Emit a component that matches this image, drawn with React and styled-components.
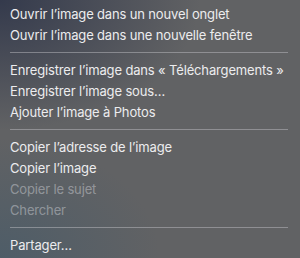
import styled, { createGlobalStyle } from 'styled-components';

const GlobalStyle = createGlobalStyle`
  html, body {
    margin: 0;
    padding: 0;
    width: 300px;
    height: 258px;
    overflow: hidden;
  }
`;

const Menu = styled.div`
  width: 300px;
  height: 258px;
  box-sizing: border-box;
  padding: 3.5px 12px 0 10px;
  background:
    radial-gradient(ellipse 160px 120px at 0% 100%, rgba(76, 92, 104, 0.9), rgba(76, 92, 104, 0) 100%),
    radial-gradient(ellipse 200px 130px at 0% 0%, rgba(52, 58, 76, 1), rgba(52, 58, 76, 0) 100%),
    #616264;
  font-family: Inter, "Noto Sans", sans-serif;
  font-size: 13px;
  letter-spacing: -0.15px;
  display: flex;
  flex-direction: column;
`;

const Item = styled.div`
  height: 21px;
  line-height: 21px;
  color: ${(p) => (p.disabled ? 'rgba(235, 235, 240, 0.4)' : '#ececee')};
  white-space: nowrap;
`;

const Separator = styled.div`
  height: 1px;
  margin: 6.5px 0 6.5px;
  background: rgba(200, 200, 205, 0.45);
`;

const groups = [
  [
    { label: 'Ouvrir l’image dans un nouvel onglet' },
    { label: 'Ouvrir l’image dans une nouvelle fenêtre' },
  ],
  [
    { label: 'Enregistrer l’image dans « Téléchargements »' },
    { label: 'Enregistrer l’image sous…' },
    { label: 'Ajouter l’image à Photos' },
  ],
  [
    { label: 'Copier l’adresse de l’image' },
    { label: 'Copier l’image' },
    { label: 'Copier le sujet', disabled: true },
    { label: 'Chercher', disabled: true },
  ],
  [{ label: 'Partager…' }],
];

export default function App() {
  return (
    <>
      <GlobalStyle />
      <Menu>
        {groups.map((group, i) => (
          <div key={i}>
            {i > 0 && <Separator />}
            {group.map((item) => (
              <Item key={item.label} disabled={item.disabled}>
                {item.label}
              </Item>
            ))}
          </div>
        ))}
      </Menu>
    </>
  );
}
